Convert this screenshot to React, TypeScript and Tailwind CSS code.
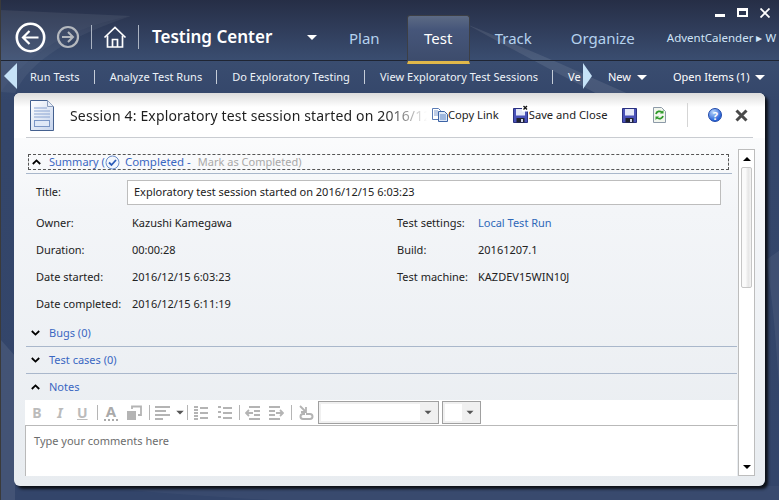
import type { ReactNode } from 'react'

const font = { fontFamily: '"Noto Sans", sans-serif' }

const navLinks = ['Run Tests', 'Analyze Test Runs', 'Do Exploratory Testing', 'View Exploratory Test Sessions']

function Swoosh() {
  return (
    <svg className="absolute left-0 top-0 w-[779px] h-[500px] pointer-events-none" viewBox="0 0 779 500">
      <path d="M0 92 C30 50 70 28 130 16 L0 10 Z" fill="#ffffff" opacity="0.07" />
      <path d="M0 92 C30 50 70 28 130 16 C70 36 30 60 14 93 Z" fill="#ffffff" opacity="0.05" />
      <path d="M465 24 C515 44 570 68 632 96 L600 96 C550 70 505 46 465 24 Z" fill="#ffffff" opacity="0.09" />
      <path d="M0 340 L14 356 L14 500 L0 500 Z" fill="#ffffff" opacity="0.08" />
      <path d="M765 260 C772 300 775 340 779 400 L779 250 Z" fill="#ffffff" opacity="0.06" />
      <path d="M90 486 C140 492 200 496 270 500 L779 500 L779 486 Z" fill="#ffffff" opacity="0.03" />
    </svg>
  )
}

function BackIcon() {
  return (
    <svg width="31" height="31" viewBox="0 0 31 31" fill="none" stroke="#ffffff">
      <circle cx="15.5" cy="15.5" r="13.7" strokeWidth="2.6" />
      <path d="M23.5 15.5H8.5M14.5 9l-6.5 6.5 6.5 6.5" strokeWidth="2.2" />
    </svg>
  )
}

function ForwardIcon() {
  return (
    <svg width="24" height="24" viewBox="0 0 24 24" fill="none" stroke="#b4b8be">
      <circle cx="12" cy="12" r="10" strokeWidth="2.2" />
      <path d="M6 12h11M12 7l5 5-5 5" strokeWidth="2" />
    </svg>
  )
}

function HomeIcon() {
  return (
    <svg width="24" height="24" viewBox="0 0 24 24" fill="none" stroke="#ffffff" strokeWidth="1.7">
      <path d="M1.5 12.5 12 2.5l10.5 10" />
      <path d="M4.5 10.5V22h15V10.5" />
      <path d="M9.5 22v-7.5h5V22" />
    </svg>
  )
}

function DocIcon() {
  return (
    <svg width="24" height="31" viewBox="0 0 24 31">
      <defs>
        <linearGradient id="docFill" x1="0" y1="0" x2="1" y2="1">
          <stop offset="0" stopColor="#ffffff" />
          <stop offset="1" stopColor="#c5d3ec" />
        </linearGradient>
      </defs>
      <path d="M.5.5h17l6 6v24H.5z" fill="url(#docFill)" stroke="#44608f" />
      <path d="M17.5.5v6h6" fill="#e8eef8" stroke="#8a9cbc" />
      <path d="M4 8h13M4 11h16M4 14h16M4 17h16" stroke="#8aa4d2" />
      <rect x="4.5" y="20.5" width="15" height="6" fill="#dfe8f7" stroke="#7b96c6" />
    </svg>
  )
}

function CopyIcon() {
  return (
    <svg width="16" height="14" viewBox="0 0 16 14">
      <path d="M.5.5h6l2 2v9H.5z" fill="#ffffff" stroke="#5a7bb5" />
      <path d="M2 3h4M2 5h5M2 7h5" stroke="#7e9bcd" />
      <path d="M6.5 3.5h6l3 3v7h-9z" fill="#dde8f8" stroke="#3b62a5" />
      <path d="M8 7h6M8 9h6M8 11h6" stroke="#5f86c6" />
    </svg>
  )
}

function FloppyIcon({ withX }: { withX?: boolean }) {
  return (
    <svg width="15" height="15" viewBox="0 0 15 15" className="overflow-visible">
      <path d="M.5.5h14v14H.5z" fill="#4a52b8" stroke="#2a3180" />
      <rect x="3" y="1" width="9" height="6.500" fill="#e4e8f8" />
      <rect x="3.500" y="10" width="8" height="4.500" fill="#20222e" />
      <rect x="8" y="11" width="2" height="3" fill="#d4d8e8" />
      {withX && (
        <>
          <rect x="9" y="-3" width="6.500" height="6.500" fill="#ffffff" />
          <path d="M10.500-2l3.500 3.500M14-2l-3.500 3.500" stroke="#111111" strokeWidth="1.300" />
        </>
      )}
    </svg>
  )
}

function RefreshIcon() {
  return (
    <svg width="13" height="16" viewBox="0 0 13 16">
      <path d="M.5.5h8l4 4v11H.5z" fill="#f2f6ee" stroke="#8d9aa8" />
      <path d="M3 7a3.5 3.5 0 0 1 6-1.5M10 9a3.5 3.5 0 0 1-6 1.5" fill="none" stroke="#2f9a2a" strokeWidth="1.8" />
      <path d="M10.5 3v3.5H7zM2.5 13V9.5H6z" fill="#2f9a2a" />
    </svg>
  )
}

function HelpIcon() {
  return (
    <div className="w-[14px] h-[14px] rounded-full border border-[#1d46a8] bg-[radial-gradient(circle_at_35%_25%,#b8d4fb,#2a66d8_70%)] flex items-center justify-center text-white text-[11px] font-bold leading-none">
      ?
    </div>
  )
}

function CloseIcon() {
  return (
    <svg width="13" height="13" viewBox="0 0 13 13" stroke="#4a4a4a" strokeWidth="3">
      <path d="M1.5 1.5l10 10M11.5 1.5l-10 10" />
    </svg>
  )
}

function Chevron({ up }: { up?: boolean }) {
  return (
    <svg width="9" height="6" viewBox="0 0 9 6" fill="none" stroke="#000000" strokeWidth="1.8">
      <path d={up ? 'M.8 5 4.5 1.4 8.2 5' : 'M.8 1 4.5 4.6 8.2 1'} />
    </svg>
  )
}

function Caret({ white }: { white?: boolean }) {
  return (
    <span className={`inline-block w-0 h-0 border-l-[5px] border-r-[5px] border-t-[5px] border-l-transparent border-r-transparent ${white ? 'border-t-white' : 'border-t-[#555]'}`} />
  )
}

function SectionHeader({ label, up, line = true }: { label: string; up?: boolean; line?: boolean }) {
  return (
    <div className={`flex items-center ${line ? 'h-[27px] border-b border-[#a9b7cb]' : 'h-[26px]'}`}>
      <span className="w-[23px] pl-[5px] flex"><Chevron up={up} /></span>
      <span className="text-[#3a67c2]">{label}</span>
    </div>
  )
}

function Field({ label, value, link }: { label: string; value: string; link?: boolean }) {
  return (
    <div className="flex h-[27px] items-center">
      <span className="w-[81px] shrink-0">{label}</span>
      <span className={link ? 'text-[#2f68b8]' : ''}>{value}</span>
    </div>
  )
}

function Gray({ children }: { children: ReactNode }) {
  return (
    <svg width="16" height="16" viewBox="0 0 16 16" fill="none" stroke="#b4b4b4" strokeWidth="1.8" className="shrink-0">
      {children}
    </svg>
  )
}

function Sep() {
  return <span className="block w-px h-[15px] bg-[#b5b5b5]" />
}

function EditorToolbar() {
  return (
    <div className="h-[26px] bg-white border-b border-[#b9b9b9] flex items-center pl-[7px] shrink-0">
      <span className="w-[10px] text-[#bbb] text-[14px] font-bold text-center">B</span>
      <span className="ml-[14px] w-[8px] text-[#bbb] text-[14px] font-bold italic text-center">I</span>
      <span className="ml-[13px] w-[10px] text-[#bbb] text-[14px] font-bold underline text-center">U</span>
      <span className="ml-[10px]"><Sep /></span>
      <span className="ml-[6px] w-[14px] text-[#aaa] text-[15px] font-bold leading-none border-b-2 border-dotted border-[#aaa] text-center">A</span>
      <span className="ml-[8px] flex">
        <Gray>
          <rect x="1" y="6" width="9" height="9" fill="#b4b4b4" stroke="none" />
          <path d="M6 4V1.500h9V10h-3" />
        </Gray>
      </span>
      <span className="ml-[7px]"><Sep /></span>
      <span className="ml-[4px] flex">
        <Gray>
          <path d="M1 2h15M1 6h11M1 10h15M1 14h8" />
        </Gray>
      </span>
      <span className="ml-[5px] flex scale-75"><Caret /></span>
      <span className="ml-[2px]"><Sep /></span>
      <span className="ml-[5px] flex">
        <Gray>
          <path d="M1 2h4M1 5h4M1 8h4M1 11h4M1 14h4M7 3h8M7 8h8M7 13h8" />
        </Gray>
      </span>
      <span className="ml-[8px] flex">
        <Gray>
          <path d="M1 2h3M1 7h3M1 12h3M6 3h9M6 8h9M6 13h9" />
        </Gray>
      </span>
      <span className="ml-[6px]"><Sep /></span>
      <span className="ml-[5px] flex">
        <Gray>
          <path d="M4 2h11M9 6h6M9 10h6M4 14h11M1 8h7M4 5 1 8l3 3" />
        </Gray>
      </span>
      <span className="ml-[7px] flex">
        <Gray>
          <path d="M1 2h11M1 6h6M1 10h6M1 14h11M8 8h7M12 5l3 3-3 3" />
        </Gray>
      </span>
      <span className="ml-[7px]"><Sep /></span>
      <span className="ml-[6px] flex">
        <Gray>
          <path d="M2 1l6 6M8 2v5H3" />
          <path d="M8 9h4a2.500 2.500 0 0 1 0 5H5a2.500 2.500 0 0 1 0-5h2" strokeWidth="2" />
        </Gray>
      </span>
      <div className="ml-[4px] w-[121px] h-[23px] border border-[#a0a0a0] bg-[#f0f0f0] p-[2px] flex items-center">
        <span className="w-[99px] h-full bg-white" />
        <span className="ml-auto mr-[3px] flex scale-[.7]"><Caret /></span>
      </div>
      <div className="ml-[3px] w-[39px] h-[23px] border border-[#a0a0a0] bg-[#f0f0f0] p-[2px] flex items-center">
        <span className="w-[17px] h-full bg-white" />
        <span className="ml-auto mr-[3px] flex scale-[.7]"><Caret /></span>
      </div>
    </div>
  )
}

function ScrollBar() {
  return (
    <div className="w-[17px] shrink-0 border border-[#bdbdbd] bg-white flex flex-col items-center">
      <div className="h-[17px] flex items-center justify-center">
        <span className="w-0 h-0 border-l-[4px] border-r-[4px] border-b-[4px] border-l-transparent border-r-transparent border-b-black" />
      </div>
      <div className="w-[11px] h-[121px] border border-[#c6c6c6] rounded-[2px] bg-[linear-gradient(90deg,#fafafa_0%,#fafafa_40%,#e6e6e6_70%,#f4f4f4_100%)]" />
      <div className="mt-auto h-[17px] flex items-center justify-center">
        <span className="w-0 h-0 border-l-[4px] border-r-[4px] border-t-[4px] border-l-transparent border-r-transparent border-t-black" />
      </div>
    </div>
  )
}

export default function App() {
  return (
    <div style={font} className="relative w-[779px] h-[500px] overflow-hidden flex flex-col bg-[linear-gradient(180deg,#262e46_0%,#3a4d70_12%,#34466a_20%,#33456a_100%)] border-l border-[#3a3a3a] text-[11px]">
      <Swoosh />

      {/* window buttons */}
      <div className="absolute left-[714px] top-[8px] flex items-start">
        <span className="w-[10px] h-[3px] bg-white mt-[6px]" />
        <span className="ml-[12px] w-[11px] h-[9px] border-2 border-white border-t-[3px]" />
        <svg width="10" height="10" viewBox="0 0 10 10" stroke="#ffffff" strokeWidth="1.8" className="ml-[12px]">
          <path d="M.5.5l9 9M9.500.5l-9 9" />
        </svg>
      </div>

      {/* top bar */}
      <div className="relative h-[61px] shrink-0 flex items-end border-b border-[#1f2533] pl-[14px]">
        <div className="flex items-center h-[46px] self-end">
          <BackIcon />
          <span className="ml-[10px]"><ForwardIcon /></span>
          <span className="ml-[11px] w-px h-[24px] bg-[#aab3c2]" />
          <span className="ml-[11px]"><HomeIcon /></span>
          <span className="ml-[11px] w-px h-[24px] bg-[#aab3c2]" />
          <span className="ml-[13px] w-[155px] text-white text-[17px] font-semibold whitespace-nowrap">Testing Center</span>
          <Caret white />
        </div>
        <span className="ml-[32px] mb-[11px] text-[#b5d2ee] text-[15px]">Plan</span>
        <div className="ml-[27px] w-[63px] h-[49px] -mb-[4px] rounded-t-[3px] border border-[#3c3f46] border-b-[3px] border-b-[#e0b84a] bg-[linear-gradient(180deg,#5c6a84_0%,#46567a_30%,#3d4c6c_100%)] flex items-center justify-center">
          <span className="text-white text-[15px] pb-[1px]">Test</span>
        </div>
        <span className="ml-[25px] mb-[11px] text-[#b5d2ee] text-[15px]">Track</span>
        <span className="ml-[39px] mb-[11px] text-[#b5d2ee] text-[15px]">Organize</span>
        <span className="ml-[32px] mb-[14px] text-[#cfe3f6] text-[11.500px] whitespace-nowrap">AdventCalender ▸ W</span>
      </div>

      {/* second bar */}
      <div className="relative h-[32px] shrink-0 flex items-center text-white">
        <div className="w-[13px] h-[26px] ml-[3px] shrink-0 bg-[#c6e2f7] [clip-path:polygon(100%_0,100%_100%,0_50%)] -mt-[2px]" />
        <div className="flex items-center ml-[13px] w-[553px] overflow-hidden whitespace-nowrap tracking-[.03px]">
          {navLinks.map((link) => (
            <div key={link} className="flex items-center">
              <span className="text-[#eef3f8]">{link}</span>
              <span className="ml-[14px] mr-[15px] w-px h-[14px] bg-[#c5cdd8]" />
            </div>
          ))}
          <span>Ve</span>
        </div>
        <div className="w-[9px] h-[26px] shrink-0 bg-[#c6e2f7] [clip-path:polygon(0_0,100%_50%,0_100%)] -mt-[2px]" />
        <span className="ml-[16px]">New</span>
        <span className="ml-[6px] flex"><Caret white /></span>
        <span className="ml-[26px] whitespace-nowrap">Open Items (1)</span>
        <span className="ml-[6px] flex"><Caret white /></span>
      </div>

      {/* session panel */}
      <div className="relative ml-[13px] w-[751px] h-[393px] flex flex-col rounded-[6px] bg-[linear-gradient(180deg,#ffffff_0%,#f3f5f8_30%,#e8ecf0_100%)] shadow-[3px_3px_3px_#0d1118] text-[#222]">
        <div className="h-[45px] shrink-0 rounded-t-[6px] bg-[linear-gradient(180deg,#dcdcdc_0px,#ffffff_14px)]">
          <div className="h-full mx-[12px] flex items-center border-b border-[#c9ccd1]">
            <span className="ml-[4px] flex"><DocIcon /></span>
            <div className="ml-[16px] w-[357px] shrink-0 overflow-hidden whitespace-nowrap text-[14px] tracking-[.15px] text-[#1e1e1e] [mask-image:linear-gradient(90deg,#000_88%,transparent_100%)]">
              Session 4: Exploratory test session started on 2016/12/15 6:03:23
            </div>
            <span className="ml-[5px] flex shrink-0"><CopyIcon /></span>
            <span className="text-[#222] whitespace-nowrap shrink-0 text-[11.200px]">Copy Link</span>
            <span className="ml-[14px] flex shrink-0"><FloppyIcon withX /></span>
            <span className="ml-[1px] text-[#222] whitespace-nowrap shrink-0 text-[11.200px]">Save and Close</span>
            <span className="ml-[15px] flex shrink-0"><FloppyIcon /></span>
            <span className="ml-[16px] flex shrink-0"><RefreshIcon /></span>
            <span className="ml-[21px] w-px h-[24px] bg-[#d5d5d5] shrink-0" />
            <span className="ml-[20px] shrink-0"><HelpIcon /></span>
            <span className="ml-[13px] flex shrink-0"><CloseIcon /></span>
          </div>
        </div>

        <div className="flex flex-1 min-h-0 pl-[12px] pr-[10px] pt-[11px] pb-[10px]">
          <div className="flex-1 min-w-0 flex flex-col pr-[1px]">
            <div className="h-[25px] flex flex-col shrink-0 border-b border-[#a9b7cb] mr-[5px]">
              <div className="mt-[5px] ml-[2px] mr-[3px] h-[16px] border border-dashed border-[#555] flex items-center">
                <span className="w-[20px] pl-[3px] flex"><Chevron up /></span>
                <span className="text-[#3a67c2] whitespace-nowrap">Summary (</span>
                <svg width="15" height="15" viewBox="0 0 15 15" fill="none" className="shrink-0">
                  <circle cx="7.5" cy="7.5" r="6.500" stroke="#6b8dc9" fill="#f2f6fd" />
                  <path d="M4 7.500l2.500 2.500L11 5" stroke="#2a5bb8" strokeWidth="1.800" />
                </svg>
                <span className="ml-[5px] text-[#3a67c2] whitespace-nowrap text-[11.500px]">Completed -</span>
                <span className="ml-[7px] text-[#a8a8a8] whitespace-nowrap">Mark as Completed)</span>
              </div>
            </div>

            <div className="flex items-center h-[25px] mt-[6px] shrink-0 ml-[10px]">
              <span className="w-[91px]">Title:</span>
              <div className="w-[594px] h-[25px] border border-[#bdbdbd] bg-white flex items-center pl-[6px]">
                Exploratory test session started on 2016/12/15 6:03:23
              </div>
            </div>

            <div className="flex ml-[10px] mt-[5px] shrink-0">
              <div className="w-[96px] flex flex-col">
                <span className="h-[27px] flex items-center">Owner:</span>
                <span className="h-[27px] flex items-center">Duration:</span>
                <span className="h-[27px] flex items-center">Date started:</span>
                <span className="h-[27px] flex items-center whitespace-nowrap">Date completed:</span>
              </div>
              <div className="w-[265px] flex flex-col">
                <span className="h-[27px] flex items-center">Kazushi Kamegawa</span>
                <span className="h-[27px] flex items-center">00:00:28</span>
                <span className="h-[27px] flex items-center">2016/12/15 6:03:23</span>
                <span className="h-[27px] flex items-center">2016/12/15 6:11:19</span>
              </div>
              <div className="flex flex-col">
                <Field label="Test settings:" value="Local Test Run" link />
                <Field label="Build:" value="20161207.1" />
                <Field label="Test machine:" value="KAZDEV15WIN10J" />
              </div>
            </div>

            <div className="mt-[2px] shrink-0">
              <SectionHeader label="Bugs (0)" />
              <SectionHeader label="Test cases (0)" />
              <SectionHeader label="Notes" up line={false} />
            </div>

            <div className="flex-1 min-h-0 flex flex-col -ml-[1px]">
              <EditorToolbar />
              <div className="flex-1 bg-white border-l border-[#b9b9b9] pl-[8px] pt-[7px] text-[#6c6c6c]">
                Type your comments here
              </div>
            </div>
          </div>
          <ScrollBar />
        </div>
      </div>
    </div>
  )
}
